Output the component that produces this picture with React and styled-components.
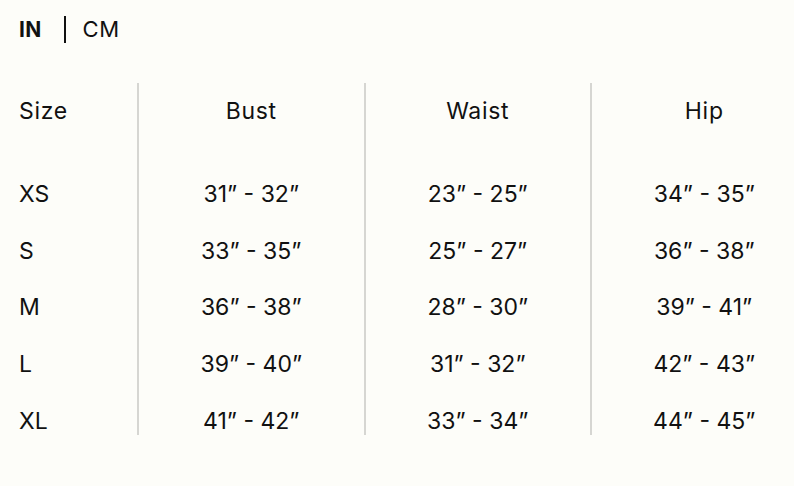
import React from "react";
import styled, { createGlobalStyle } from "styled-components";

const Global = createGlobalStyle`
  html, body { margin: 0; padding: 0; background: #fdfdf9; overflow: hidden; }
  body { font-family: Inter, "Noto Sans", sans-serif; color: #111111; }
`;

const Page = styled.div`
  width: 794px;
  height: 486px;
  background: #fdfdf9;
  overflow: hidden;
`;

const Toggle = styled.div`
  display: flex;
  align-items: center;
  padding: 14px 0 0 19px;
  height: 30px;
`;

const Unit = styled.span`
  font-size: ${(p) => (p.$active ? "21px" : "22px")};
  font-weight: ${(p) => (p.$active ? 700 : 400)};
  letter-spacing: ${(p) => (p.$active ? "0.3px" : "0.6px")};
`;

const Sep = styled.span`
  width: 2px;
  height: 27px;
  background: #111;
  margin: 0 17px 0 22px;
`;

const Table = styled.div`
  display: grid;
  grid-template-columns: 137px repeat(3, 226.5px);
  margin-top: 39px;
  width: 900px;
`;

const Column = styled.div`
  display: flex;
  flex-direction: column;
  align-items: ${(p) => (p.$first ? "flex-start" : "center")};
  padding: 14px 0 0 ${(p) => (p.$first ? "19px" : "0")};
  border-left: ${(p) => (p.$first ? "none" : "2px solid #d6d6d2")};
  height: 352px;
  box-sizing: border-box;
  gap: 28.75px;
`;

const Cell = styled.div`
  font-size: 23px;
  line-height: 28px;
  height: 28px;
  letter-spacing: 0;
  white-space: nowrap;
`;

const Head = styled(Cell)`
  margin-bottom: 26px;
  letter-spacing: 0.7px;
`;

const sizes = ["XS", "S", "M", "L", "XL"];
const cols = [
  { title: "Bust", vals: ["31” - 32”", "33” - 35”", "36” - 38”", "39” - 40”", "41” - 42”"] },
  { title: "Waist", vals: ["23” - 25”", "25” - 27”", "28” - 30”", "31” - 32”", "33” - 34”"] },
  { title: "Hip", vals: ["34” - 35”", "36” - 38”", "39” - 41”", "42” - 43”", "44” - 45”"] },
];

export default function App() {
  return (
    <Page>
      <Global />
      <Toggle>
        <Unit $active>IN</Unit>
        <Sep />
        <Unit>CM</Unit>
      </Toggle>
      <Table>
        <Column $first>
          <Head>Size</Head>
          {sizes.map((s) => (
            <Cell key={s}>{s}</Cell>
          ))}
        </Column>
        {cols.map((c) => (
          <Column key={c.title}>
            <Head>{c.title}</Head>
            {c.vals.map((v, i) => (
              <Cell key={i}>{v}</Cell>
            ))}
          </Column>
        ))}
      </Table>
    </Page>
  );
}
